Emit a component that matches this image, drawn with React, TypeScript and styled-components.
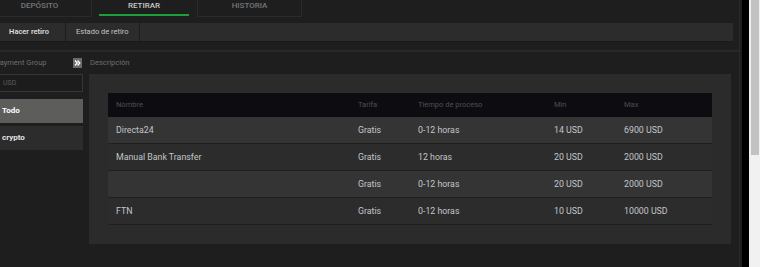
import React from 'react';
import styled, { createGlobalStyle } from 'styled-components';

const GlobalStyle = createGlobalStyle`
  html, body {
    margin: 0;
    padding: 0;
    background: #1e1e1e;
    overflow: hidden;
  }
  body {
    font-family: Roboto, "Liberation Sans", Arial, sans-serif;
  }
`;

const Page = styled.div`
  display: flex;
  width: 760px;
  height: 267px;
  background: #1e1e1e;
  overflow: hidden;
`;

const Main = styled.div`
  flex: 0 0 739px;
  display: flex;
  flex-direction: column;
  border-right: 1px solid #292929;
  overflow: hidden;
`;

const Gutter = styled.div`
  flex: 0 0 2px;
`;

const BlackStrip = styled.div`
  flex: 0 0 7px;
  background: #000;
`;

const ScrollTrack = styled.div`
  flex: 0 0 11px;
  box-sizing: border-box;
  padding: 0 1px 0 2px;
  background: #f1f1f1;
`;

const ScrollThumb = styled.div`
  height: 155px;
  background: #c2c2c2;
`;

const TabBar = styled.div`
  display: flex;
  height: 17px;
  margin-left: -13px;
`;

const Tab = styled.div<{ $active?: boolean }>`
  flex: 0 0 105px;
  box-sizing: border-box;
  display: flex;
  padding: ${p => (p.$active ? '0 7px 0 6px' : '0')};
  border: 1px solid ${p => (p.$active ? 'transparent' : '#2a2a2a')};
  border-top: none;
`;

const TabLabel = styled.div<{ $active?: boolean }>`
  flex: 1;
  text-align: center;
  font-size: 8px;
  font-weight: 500;
  line-height: 11px;
  color: ${p => (p.$active ? '#c9cacb' : '#74787c')};
  border-bottom: 2px solid ${p => (p.$active ? '#1d9c3c' : 'transparent')};
`;

const SubPanel = styled.div`
  padding: 6px 6px 8px 0;
  border-bottom: 2px solid #292929;
`;

const SubBar = styled.div`
  display: flex;
  height: 18px;
  margin-left: -7px;
  background: #2c2c2c;
  border-bottom: 1px solid #1a1a1a;
`;

const SubTab = styled.div<{ $active?: boolean }>`
  min-width: 73px;
  box-sizing: border-box;
  padding: 0 10px;
  text-align: center;
  font-size: 7.5px;
  font-weight: ${p => (p.$active ? 600 : 400)};
  line-height: 18px;
  color: ${p => (p.$active ? '#dcdcdc' : '#c4c4c4')};
  border-right: 1px solid #1c1c1c;
`;

const Content = styled.div`
  display: flex;
  gap: 6px;
  padding: 6px 8px 0 0;
  margin-left: -6px;
`;

const LeftColumn = styled.div`
  flex: 0 0 89px;
  display: flex;
  flex-direction: column;
`;

const RightColumn = styled.div`
  flex: 1;
  display: flex;
  flex-direction: column;
`;

const ColumnHeader = styled.div`
  display: flex;
  justify-content: space-between;
  align-items: flex-start;
  height: 16px;
  font-size: 7.5px;
  line-height: 10px;
  color: #6e6e6e;
  padding-left: 1px;
`;

const ToggleIcon = styled.svg`
  display: block;
  margin-right: 1px;
`;

const SearchBox = styled.div`
  height: 18px;
  box-sizing: border-box;
  padding-left: 8px;
  border: 1px solid #363636;
  background: #1c1c1c;
  font-size: 7px;
  line-height: 16px;
  color: #5c5c5c;
  margin-bottom: 7px;
`;

const GroupItem = styled.div<{ $active?: boolean }>`
  height: 24px;
  padding-left: 8px;
  margin-bottom: 3px;
  font-size: 8px;
  font-weight: 700;
  line-height: 24px;
  background: ${p => (p.$active ? '#5d5d5b' : '#2c2c2c')};
  color: ${p => (p.$active ? '#ffffff' : '#e2e2e2')};
`;

const DescPanel = styled.div`
  background: #2b2b2b;
  padding: 19px;
`;

const Grid = styled.div`
  display: grid;
  grid-template-columns: 242px 60px 136px 70px 1fr;
`;

const HeadRow = styled(Grid)`
  height: 24px;
  background: #0d0d11;
  font-size: 7.5px;
  line-height: 24px;
  color: #4d4d52;
`;

const BodyRow = styled(Grid)<{ $odd?: boolean }>`
  height: 26px;
  background: ${p => (p.$odd ? '#343434' : '#2c2c2c')};
  border-bottom: 1px solid #1f1f1f;
  font-size: 8.8px;
  line-height: 26px;
  color: #c3c6c9;
`;

const Cell = styled.div`
  padding-left: 8px;
  white-space: nowrap;
`;

type Method = {
  name: string;
  fee: string;
  time: string;
  min: string;
  max: string;
};

const methods: Method[] = [
  { name: 'Directa24', fee: 'Gratis', time: '0-12 horas', min: '14 USD', max: '6900 USD' },
  { name: 'Manual Bank Transfer', fee: 'Gratis', time: '12 horas', min: '20 USD', max: '2000 USD' },
  { name: '', fee: 'Gratis', time: '0-12 horas', min: '20 USD', max: '2000 USD' },
  { name: 'FTN', fee: 'Gratis', time: '0-12 horas', min: '10 USD', max: '10000 USD' },
];

const App: React.FC = () => {
  return (
    <Page>
      <GlobalStyle />
      <Main>
        <TabBar>
          <Tab><TabLabel>DEPÓSITO</TabLabel></Tab>
          <Tab $active><TabLabel $active>RETIRAR</TabLabel></Tab>
          <Tab><TabLabel>HISTORIA</TabLabel></Tab>
        </TabBar>

        <SubPanel>
          <SubBar>
            <SubTab $active>Hacer retiro</SubTab>
            <SubTab>Estado de retiro</SubTab>
          </SubBar>
        </SubPanel>

        <Content>
          <LeftColumn>
            <ColumnHeader>
              <span>Payment Group</span>
              <ToggleIcon width="9" height="10" viewBox="0 0 9 10">
                <rect width="9" height="10" fill="#6a6a6a" />
                <path d="M2 2.5 L4.2 5 L2 7.5 M4.6 2.5 L6.8 5 L4.6 7.5" stroke="#fff" strokeWidth="1.3" fill="none" />
              </ToggleIcon>
            </ColumnHeader>
            <SearchBox>USD</SearchBox>
            <GroupItem $active>Todo</GroupItem>
            <GroupItem>crypto</GroupItem>
          </LeftColumn>

          <RightColumn>
            <ColumnHeader>
              <span>Descripción</span>
            </ColumnHeader>
            <DescPanel>
              <HeadRow>
                <Cell>Nombre</Cell>
                <Cell>Tarifa</Cell>
                <Cell>Tiempo de proceso</Cell>
                <Cell>Min</Cell>
                <Cell>Max</Cell>
              </HeadRow>
              {methods.map((m, i) => (
                <BodyRow key={i} $odd={i % 2 === 0}>
                  <Cell>{m.name}</Cell>
                  <Cell>{m.fee}</Cell>
                  <Cell>{m.time}</Cell>
                  <Cell>{m.min}</Cell>
                  <Cell>{m.max}</Cell>
                </BodyRow>
              ))}
            </DescPanel>
          </RightColumn>
        </Content>
      </Main>
      <Gutter />
      <BlackStrip />
      <ScrollTrack>
        <ScrollThumb />
      </ScrollTrack>
    </Page>
  );
};

export default App;
